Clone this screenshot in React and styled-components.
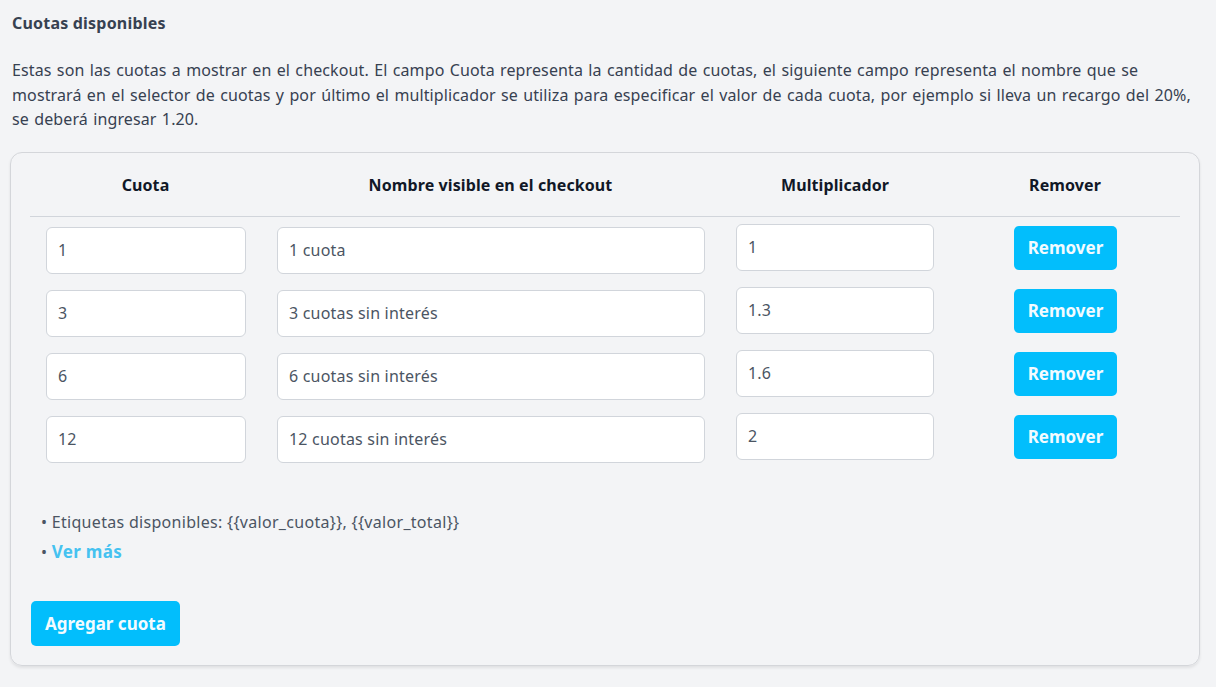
import React from 'react';
import styled, { createGlobalStyle } from 'styled-components';

const GlobalStyle = createGlobalStyle`
  body {
    margin: 0;
    background: #f3f4f6;
    font-family: "Noto Sans", "Open Sans", sans-serif;
    color: #374151;
  }
`

const Page = styled.div`
  padding: 11px 16px 20px 10px;
`

const Title = styled.h3`
  margin: 0 0 0 2px;
  font-size: 16px;
  line-height: 24px;
  font-weight: 700;
  letter-spacing: 0.2px;
  color: #374151;
`

const Intro = styled.p`
  margin: 23px 0 20px 2px;
  font-size: 16px;
  line-height: 24.5px;
  letter-spacing: 0.12px;
  word-spacing: 1px;
  color: #374151;
`

const Card = styled.div`
  border: 1px solid #d4d6da;
  border-radius: 12px;
  padding: 20px 19px 19px 19px;
  box-shadow: 0 2px 3px rgba(0, 0, 0, 0.08);
`

const Grid = styled.div`
  display: grid;
  grid-template-columns: 231px 459px 230px 230px;
`

const HeadCell = styled.div`
  text-align: center;
  font-weight: 700;
  font-size: 16px;
  line-height: 24px;
  letter-spacing: 0.1px;
  color: #111827;
  padding-bottom: 19px;
  border-bottom: 1px solid #d1d5db;
  margin-bottom: 2px;
`

const Cell = styled.div`
  padding: ${p => p.$up ? '5px 16px 11px' : '8px 15px 8px 16px'};
  display: flex;
  justify-content: ${p => p.$center ? 'center' : 'stretch'};
  align-items: flex-start;
`

const Input = styled.input`
  width: 100%;
  box-sizing: border-box;
  height: 47px;
  border: 1px solid #d1d5db;
  border-radius: 6px;
  background: #fff;
  padding: 0 11px;
  font-family: inherit;
  font-size: 16px;
  letter-spacing: 0.2px;
  color: #4b5563;
  outline: none;
`

const Button = styled.button`
  background: #02befc;
  color: #f3fbff;
  border: none;
  border-radius: 5px;
  font-family: inherit;
  font-weight: 700;
  font-size: 17px;
  height: ${p => p.$h || 44}px;
  margin-top: ${p => p.$mt || 0}px;
  padding: 0 ${p => p.$px || 14}px;
  cursor: pointer;
`

const Notes = styled.ul`
  list-style: none;
  margin: 36px 0 0 0;
  padding: 0 0 0 11px;
  font-size: 16px;
  line-height: 30px;
  letter-spacing: 0.3px;
  color: #4b5563;
  li::before {
    content: "• ";
    color: #4b5563;
  }
`

const More = styled.a`
  color: #45c2f0;
  font-weight: 700;
  font-size: 17px;
  text-decoration: none;
`

const Footer = styled.div`
  margin-top: 34px;
  padding-left: 1px;
`

const rows = [
  { cuota: '1', nombre: '1 cuota', mult: '1' },
  { cuota: '3', nombre: '3 cuotas sin interés', mult: '1.3' },
  { cuota: '6', nombre: '6 cuotas sin interés', mult: '1.6' },
  { cuota: '12', nombre: '12 cuotas sin interés', mult: '2' },
];

export default function App() {
  return (
    <Page>
      <GlobalStyle />
      <Title>Cuotas disponibles</Title>
      <Intro>
        Estas son las cuotas a mostrar en el checkout. El campo Cuota representa la cantidad de cuotas, el siguiente campo representa el nombre que se mostrará en el selector de cuotas y por último el multiplicador se utiliza para especificar el valor de cada cuota, por ejemplo si lleva un recargo del 20%, se deberá ingresar 1.20.
      </Intro>
      <Card>
        <Grid>
          <HeadCell>Cuota</HeadCell>
          <HeadCell>Nombre visible en el checkout</HeadCell>
          <HeadCell>Multiplicador</HeadCell>
          <HeadCell>Remover</HeadCell>
          {rows.map(r => (
            <React.Fragment key={r.cuota}>
              <Cell><Input defaultValue={r.cuota} /></Cell>
              <Cell><Input defaultValue={r.nombre} /></Cell>
              <Cell $up><Input defaultValue={r.mult} /></Cell>
              <Cell $center><Button $mt={-1}>Remover</Button></Cell>
            </React.Fragment>
          ))}
        </Grid>
        <Notes>
          <li>Etiquetas disponibles: {'{{valor_cuota}}'}, {'{{valor_total}}'}</li>
          <li><More href="#">Ver más</More></li>
        </Notes>
        <Footer>
          <Button $h={45} $px={14}>Agregar cuota</Button>
        </Footer>
      </Card>
    </Page>
  );
}
